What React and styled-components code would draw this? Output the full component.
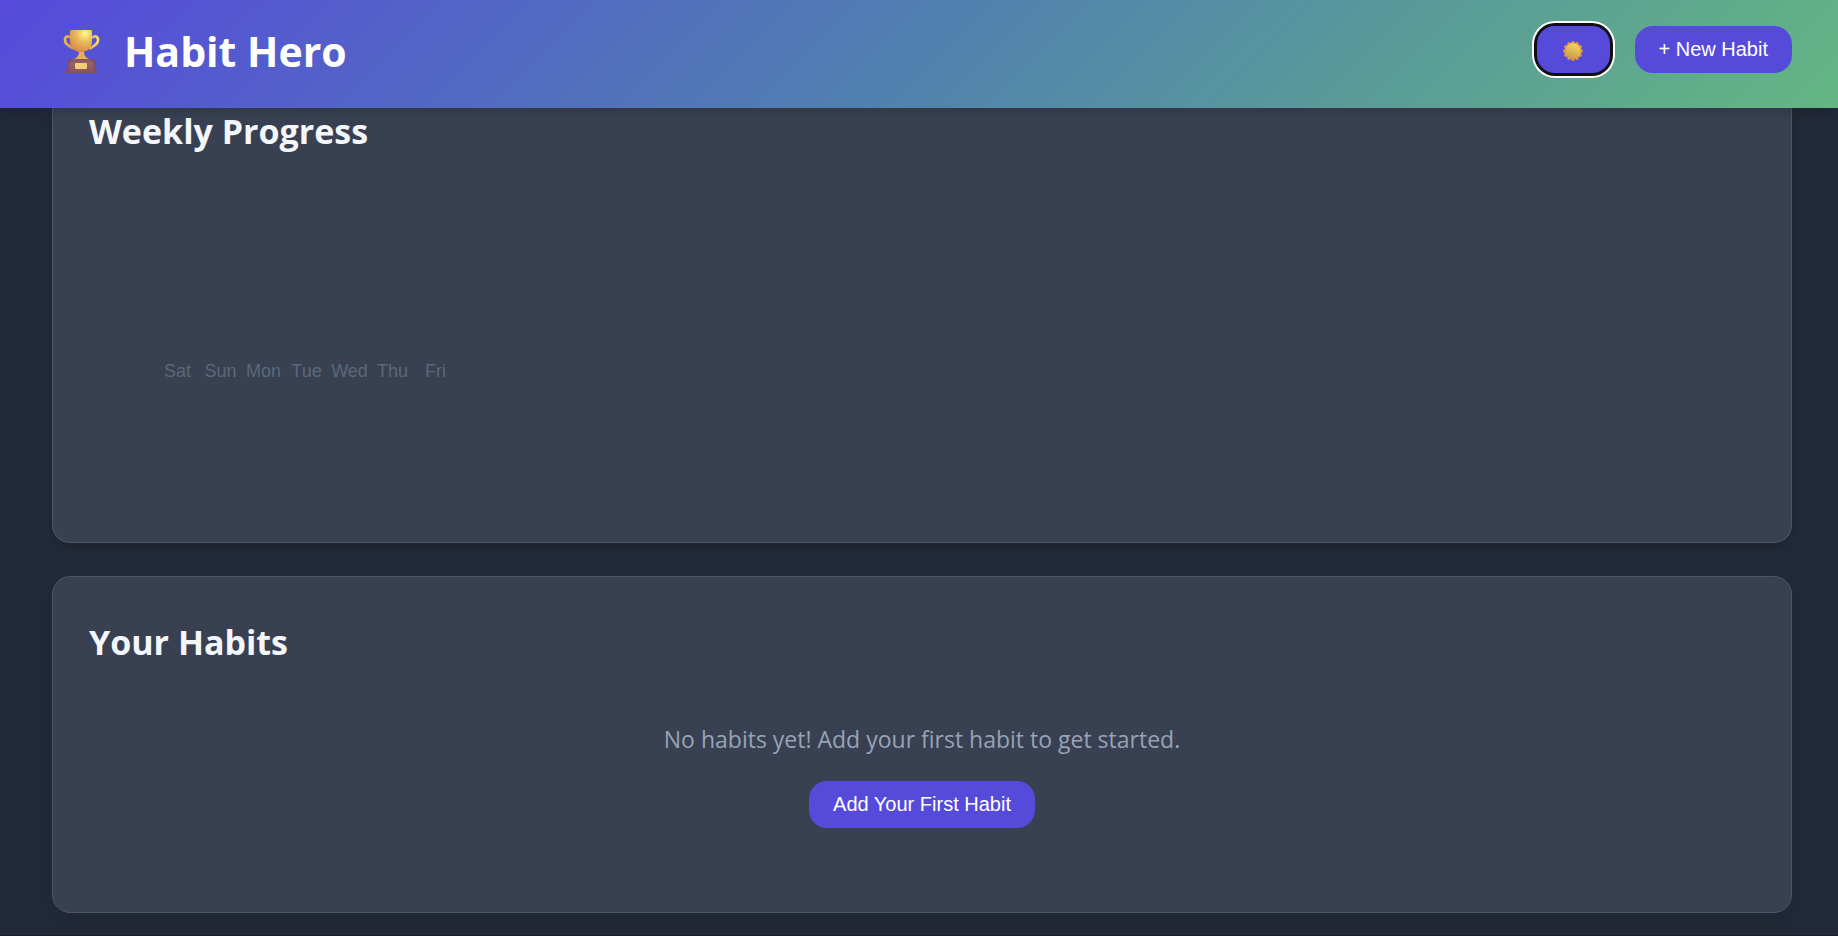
import React from "react";
import styled, { createGlobalStyle } from "styled-components";

const GlobalStyle = createGlobalStyle`
  *, *::before, *::after { box-sizing: border-box; }
  body {
    margin: 0;
    background: #222938;
    color: #f3f6fb;
    font-family: "Open Sans", "Noto Sans", sans-serif;
  }
`;

const Page = styled.div`
  display: flex;
  flex-direction: column;
  min-height: 100vh;
`;

const Header = styled.header`
  position: relative;
  z-index: 1;
  display: flex;
  align-items: flex-start;
  justify-content: space-between;
  height: 108px;
  padding: 0 46px 0 52px;
  background: linear-gradient(135deg, #564adc 0%, #5081af 50%, #64b682 100%);
  box-shadow: 0 4px 12px rgba(0, 0, 0, 0.15);
`;

const Brand = styled.h1`
  display: flex;
  align-items: center;
  gap: 24px;
  height: 102px;
  margin: 0;
  padding-left: 10px;
  color: #fff;
  font-size: 41px;
  font-weight: 700;
  line-height: 60px;
`;

const Actions = styled.div`
  display: flex;
  gap: 25px;
  padding-top: 26px;
`;

const Button = styled.button`
  display: inline-flex;
  align-items: center;
  justify-content: center;
  height: 47px;
  padding: 0 24px 2px;
  border: 0;
  border-radius: 18px;
  background: #564adb;
  color: #fff;
  font-family: "Liberation Sans", Arial, sans-serif;
  font-size: 20px;
  line-height: 24px;
  cursor: pointer;
`;

const ThemeButton = styled(Button)`
  width: 73px;
  padding: 2px 0 0;
  box-shadow: 0 0 0 3px #101014, 0 0 0 5px #fff;
`;

const Main = styled.main`
  display: flex;
  flex: 1;
  flex-direction: column;
  gap: 33px;
  padding: 0 46px 22px 52px;
`;

const Card = styled.section`
  padding: 42px 36px;
  border: 1px solid #4a5568;
  border-radius: 18px;
  background: #384052;
  box-shadow: ${(p) => (p.$raised ? "0 10px 30px rgba(0, 0, 0, 0.1)" : "0 4px 12px rgba(0, 0, 0, 0.15)")};
`;

const ProgressCard = styled(Card)`
  height: 435px;
  padding-top: 0;
  border-top: 0;
  border-top-left-radius: 0;
  border-top-right-radius: 0;
`;

const HabitsCard = styled(Card)`
  min-height: 337px;
`;

const CardTitle = styled.h2`
  margin: 0;
  font-size: 34px;
  font-weight: 700;
  line-height: 46px;
`;

const Days = styled.ul`
  display: grid;
  grid-template-columns: repeat(7, 43px);
  margin: 205px 0 0;
  padding: 0 0 0 67px;
  color: #5c687b;
  font-family: "Liberation Sans", Arial, sans-serif;
  font-size: 18px;
  line-height: 24px;
  list-style: none;
  text-align: center;
`;

const EmptyState = styled.div`
  display: flex;
  flex-direction: column;
  align-items: center;
  gap: 25px;
  padding-top: 57px;
`;

const EmptyText = styled.p`
  margin: 0;
  color: #97a3b7;
  font-size: 23px;
  line-height: 34px;
`;

const FooterEdge = styled.footer`
  height: 1px;
  background: #1b1e27;
`;

const Trophy = () => (
  <svg width="38" height="44" viewBox="0 0 38 44" aria-hidden="true">
    <defs>
      <radialGradient id="cup" cx="0.68" cy="0.16" r="0.85">
        <stop offset="0" stopColor="#fff88c" />
        <stop offset="0.5" stopColor="#e9b758" />
        <stop offset="1" stopColor="#d88b49" />
      </radialGradient>
      <linearGradient id="handle" x1="0" y1="0" x2="1" y2="0">
        <stop offset="0" stopColor="#e5b454" />
        <stop offset="0.3" stopColor="#d18a48" />
        <stop offset="0.8" stopColor="#e6b655" />
        <stop offset="1" stopColor="#f7d769" />
      </linearGradient>
      <linearGradient id="base" x1="0" y1="0" x2="0" y2="1">
        <stop offset="0" stopColor="#84545f" />
        <stop offset="0.3" stopColor="#96616a" />
        <stop offset="1" stopColor="#895264" />
      </linearGradient>
    </defs>
    <path
      d="M9 9C6 6 3 7.500 3 11c0 4 3 5 9 9M30 9c3-3 6-1.500 6 2 0 4-3 5-9 9"
      fill="none"
      stroke="url(#handle)"
      strokeWidth="2.700"
    />
    <path d="M17 22h5c0 4 1 6 5 8H12c4-2 5-4 5-8Z" fill="#e8b150" />
    <path d="M8 2q0-1 2-1h18q2 0 2 1v10c0 6-4 11-11 11S8 18 8 12Z" fill="url(#cup)" />
    <path d="M7 30h25l3 14H4Z" fill="url(#base)" />
    <path d="M7 30h2L6 44H4ZM30 30h2l3 14h-2Z" fill="#754556" opacity=".55" />
    <rect x="13" y="34" width="12" height="6" rx="1" fill="#f4ce74" />
  </svg>
);

const Sun = () => (
  <svg width="20" height="20" viewBox="0 0 20 20" aria-hidden="true">
    <defs>
      <linearGradient id="disc" x1="0.7" y1="0" x2="0.3" y2="1">
        <stop offset="0" stopColor="#f6d85f" />
        <stop offset="1" stopColor="#c99a48" />
      </linearGradient>
    </defs>
    <g fill="#e8953d">
      {Array.from({ length: 12 }, (_, i) => (
        <circle key={i} cx="10" cy="2" r="1.900" transform={`rotate(${i * 30} 10 10)`} />
      ))}
    </g>
    <circle cx="10" cy="10" r="7.700" fill="url(#disc)" />
  </svg>
);

const DAYS = ["Sat", "Sun", "Mon", "Tue", "Wed", "Thu", "Fri"];

export default function App() {
  return (
    <>
      <GlobalStyle />
      <Page>
        <Header>
          <Brand>
            <Trophy />
            Habit Hero
          </Brand>
          <Actions>
            <ThemeButton type="button" aria-label="Toggle theme">
              <Sun />
            </ThemeButton>
            <Button type="button">+ New Habit</Button>
          </Actions>
        </Header>
        <Main>
          <ProgressCard>
            <CardTitle>Weekly Progress</CardTitle>
            <Days>
              {DAYS.map((day) => (
                <li key={day}>{day}</li>
              ))}
            </Days>
          </ProgressCard>
          <HabitsCard $raised>
            <CardTitle>Your Habits</CardTitle>
            <EmptyState>
              <EmptyText>No habits yet! Add your first habit to get started.</EmptyText>
              <Button type="button">Add Your First Habit</Button>
            </EmptyState>
          </HabitsCard>
        </Main>
        <FooterEdge />
      </Page>
    </>
  );
}
